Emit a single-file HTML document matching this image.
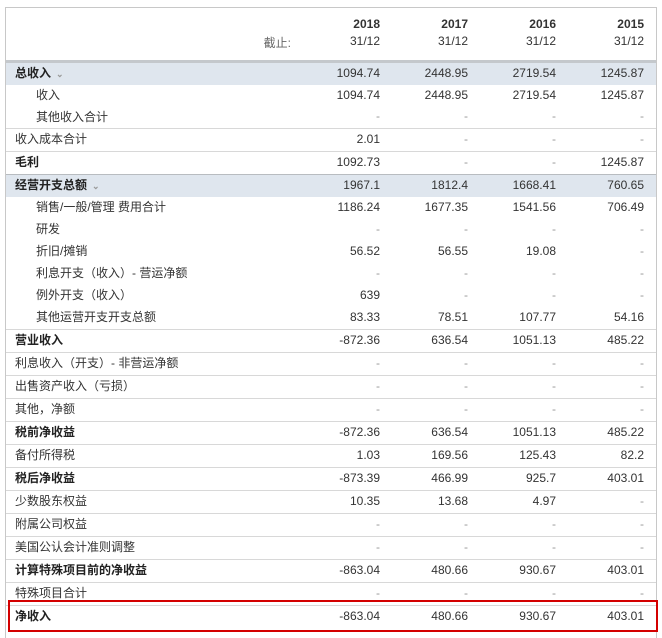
<!DOCTYPE html><html><head><meta charset="utf-8"><style>
body{margin:0;background:#fff;font-family:"Liberation Sans","Noto Sans CJK SC",sans-serif;font-size:12px;color:#333;}
.t{position:absolute;left:5px;top:7px;width:650px;height:630px;border-left:1px solid #c8c8c8;border-right:1px solid #c8c8c8;border-top:1px solid #c8c8c8;}
.hd{position:absolute;left:0;top:0;width:650px;height:52px;border-bottom:3px solid #c4c8cc;}
.r{position:absolute;left:0;width:650px;display:flex;align-items:center;box-sizing:border-box;padding-bottom:3px;}
.r.b{border-top:1px solid #d8d8d8;}
.r.g{background:#dfe6ee;}
.l{width:286px;padding-left:9px;box-sizing:border-box;}
.l.i{padding-left:30px;}
.l.bo{font-weight:bold;color:#222;}
.n{width:88px;text-align:right;}
.d{color:#999;}
.ar{color:#999;font-size:9px;margin-left:5px;}
.red{position:absolute;left:8px;top:600px;width:646px;height:28px;border:2px solid #d40000;}
</style></head><body>
<div class="t">
<div class="hd">
<div style="position:absolute;left:0;width:286px;top:26px;text-align:right;color:#666;font-size:12px;padding-right:1px;box-sizing:border-box">截止:</div>
<div style="position:absolute;left:286px;top:9px;display:flex;">
<div class="n"><b>2018</b><br><span style="line-height:20px">31/12</span></div>
<div class="n"><b>2017</b><br><span style="line-height:20px">31/12</span></div>
<div class="n"><b>2016</b><br><span style="line-height:20px">31/12</span></div>
<div class="n"><b>2015</b><br><span style="line-height:20px">31/12</span></div>
</div></div>
<div class="r g" style="top:55px;height:22px"><div class="l bo">总收入<span class="ar">⌄</span></div><div class="n">1094.74</div><div class="n">2448.95</div><div class="n">2719.54</div><div class="n">1245.87</div></div>
<div class="r" style="top:77px;height:22px"><div class="l i">收入</div><div class="n">1094.74</div><div class="n">2448.95</div><div class="n">2719.54</div><div class="n">1245.87</div></div>
<div class="r" style="top:99px;height:21px"><div class="l i">其他收入合计</div><div class="n d">-</div><div class="n d">-</div><div class="n d">-</div><div class="n d">-</div></div>
<div class="r b" style="top:120px;height:23px"><div class="l">收入成本合计</div><div class="n">2.01</div><div class="n d">-</div><div class="n d">-</div><div class="n d">-</div></div>
<div class="r b" style="top:143px;height:23px"><div class="l bo">毛利</div><div class="n">1092.73</div><div class="n d">-</div><div class="n d">-</div><div class="n">1245.87</div></div>
<div class="r g" style="top:166px;height:23px;border-top:1px solid #b8bcc0"><div class="l bo">经营开支总额<span class="ar">⌄</span></div><div class="n">1967.1</div><div class="n">1812.4</div><div class="n">1668.41</div><div class="n">760.65</div></div>
<div class="r" style="top:189px;height:22px"><div class="l i">销售/一般/管理 费用合计</div><div class="n">1186.24</div><div class="n">1677.35</div><div class="n">1541.56</div><div class="n">706.49</div></div>
<div class="r" style="top:211px;height:22px"><div class="l i">研发</div><div class="n d">-</div><div class="n d">-</div><div class="n d">-</div><div class="n d">-</div></div>
<div class="r" style="top:233px;height:22px"><div class="l i">折旧/摊销</div><div class="n">56.52</div><div class="n">56.55</div><div class="n">19.08</div><div class="n d">-</div></div>
<div class="r" style="top:255px;height:22px"><div class="l i">利息开支（收入）- 营运净额</div><div class="n d">-</div><div class="n d">-</div><div class="n d">-</div><div class="n d">-</div></div>
<div class="r" style="top:277px;height:22px"><div class="l i">例外开支（收入）</div><div class="n">639</div><div class="n d">-</div><div class="n d">-</div><div class="n d">-</div></div>
<div class="r" style="top:299px;height:22px"><div class="l i">其他运营开支开支总额</div><div class="n">83.33</div><div class="n">78.51</div><div class="n">107.77</div><div class="n">54.16</div></div>
<div class="r b" style="top:321px;height:23px"><div class="l bo">营业收入</div><div class="n">-872.36</div><div class="n">636.54</div><div class="n">1051.13</div><div class="n">485.22</div></div>
<div class="r b" style="top:344px;height:23px"><div class="l">利息收入（开支）- 非营运净额</div><div class="n d">-</div><div class="n d">-</div><div class="n d">-</div><div class="n d">-</div></div>
<div class="r b" style="top:367px;height:23px"><div class="l">出售资产收入（亏损）</div><div class="n d">-</div><div class="n d">-</div><div class="n d">-</div><div class="n d">-</div></div>
<div class="r b" style="top:390px;height:23px"><div class="l">其他，净额</div><div class="n d">-</div><div class="n d">-</div><div class="n d">-</div><div class="n d">-</div></div>
<div class="r b" style="top:413px;height:23px"><div class="l bo">税前净收益</div><div class="n">-872.36</div><div class="n">636.54</div><div class="n">1051.13</div><div class="n">485.22</div></div>
<div class="r b" style="top:436px;height:23px"><div class="l">备付所得税</div><div class="n">1.03</div><div class="n">169.56</div><div class="n">125.43</div><div class="n">82.2</div></div>
<div class="r b" style="top:459px;height:23px"><div class="l bo">税后净收益</div><div class="n">-873.39</div><div class="n">466.99</div><div class="n">925.7</div><div class="n">403.01</div></div>
<div class="r b" style="top:482px;height:23px"><div class="l">少数股东权益</div><div class="n">10.35</div><div class="n">13.68</div><div class="n">4.97</div><div class="n d">-</div></div>
<div class="r b" style="top:505px;height:23px"><div class="l">附属公司权益</div><div class="n d">-</div><div class="n d">-</div><div class="n d">-</div><div class="n d">-</div></div>
<div class="r b" style="top:528px;height:23px"><div class="l">美国公认会计准则调整</div><div class="n d">-</div><div class="n d">-</div><div class="n d">-</div><div class="n d">-</div></div>
<div class="r b" style="top:551px;height:23px"><div class="l bo">计算特殊项目前的净收益</div><div class="n">-863.04</div><div class="n">480.66</div><div class="n">930.67</div><div class="n">403.01</div></div>
<div class="r b" style="top:574px;height:23px"><div class="l">特殊项目合计</div><div class="n d">-</div><div class="n d">-</div><div class="n d">-</div><div class="n d">-</div></div>
<div class="r b" style="top:597px;height:23px"><div class="l bo">净收入</div><div class="n">-863.04</div><div class="n">480.66</div><div class="n">930.67</div><div class="n">403.01</div></div>
</div>
<div class="red"></div>
</body></html>
